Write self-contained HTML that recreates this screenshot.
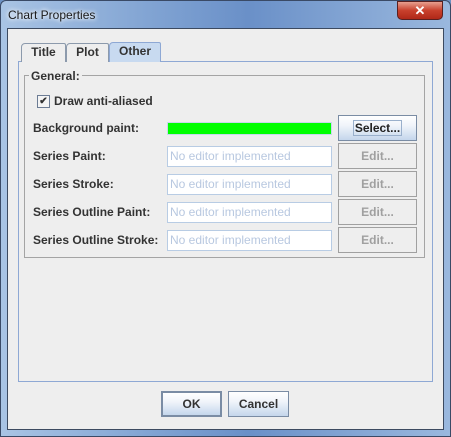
<!DOCTYPE html>
<html><head><style>
*{margin:0;padding:0;box-sizing:border-box}
body{width:451px;height:437px;overflow:hidden;font-family:"Liberation Sans",sans-serif;font-size:12px;font-weight:bold;color:#333;position:relative;background:#6d92c4}
.frame{position:absolute;left:0;top:0;width:451px;height:437px;border-radius:6px 6px 0 0;background:linear-gradient(90deg,#a9c4e4 0%,#7fa2d2 35%,#6a90c8 55%,#9ab8de 100%);border:1px solid #3a4a66}
.title{position:absolute;left:8px;top:8px;font-weight:normal;font-size:12px;color:#1a1a1a;text-shadow:0 0 4px #fff,0 0 6px #fff}
.close{position:absolute;left:397px;top:1px;width:46px;height:19px;border-radius:0 0 5px 5px;background:linear-gradient(#e8a090,#c8402c 50%,#b02818);border:1px solid #5a2020;color:#fff;text-align:center;font-size:13px;line-height:17px}
.client{position:absolute;left:7px;top:28px;width:437px;height:402px;background:#eeeeee;border:1px solid #3c4a60}
.a{position:absolute}
.tab{position:absolute;top:43px;height:19px;border:1px solid #8c9aac;border-bottom:none;background:#eeeeee;text-align:center;line-height:17px;font-size:12px;border-radius:4px 2px 0 0}
.panel{position:absolute;left:18px;top:61px;width:415px;height:321px;border:1px solid #8ea8d4}
.group{position:absolute;left:24px;top:75px;width:401px;height:183px;border:1px solid #a4a4a4}
.lbl{position:absolute;left:33px}
.tf{position:absolute;left:167px;width:165px;height:21px;border:1px solid #b8cce4;background:#fff;color:#b8c8e0;font-weight:normal;padding-left:2px;line-height:19px}
.btn{position:absolute;left:338px;width:79px;height:26px;border:1px solid #a0a0a0;color:#a0a0a0;text-align:center;line-height:24px}
.b2{position:absolute;top:391px;height:26px;border:1px solid #7a8ca4;background:linear-gradient(#fff,#f0f4fa 40%,#c4d6ec);text-align:center;line-height:24px}
</style></head><body>
<div class="frame"></div>
<div class="title">Chart Properties</div>
<div class="close">✕</div>
<div class="client"></div>
<div class="panel"></div>
<div class="tab" style="left:21px;width:45px">Title</div>
<div class="tab" style="left:66px;width:43px">Plot</div>
<div class="tab" style="left:109px;width:52px;top:42px;height:20px;background:#c8daf0;border-color:#8ea8d4">Other</div>
<div class="group"></div>
<div class="a" style="left:29px;top:69px;background:#eee;padding:0 2px">General:</div>
<div class="a" style="left:37px;top:95px;width:13px;height:13px;border:1px solid #6c7c94;background:#f4f4f4;font-size:10px;line-height:11px;text-align:center">✔</div>
<div class="a" style="left:54px;top:94px">Draw anti-aliased</div>
<div class="lbl" style="top:121px">Background paint:</div>
<div class="a" style="left:167px;top:122px;width:165px;height:13px;border:1px solid #c8d8ec;background:#00ff00"></div>
<div class="btn" style="top:115px;color:#222;border-color:#7a8ca4;background:linear-gradient(#fff,#f0f4fa 40%,#c4d6ec)"><span style="border:1px solid #9ab0cc;padding:0 1px">Select...</span></div>
<div class="lbl" style="top:149px">Series Paint:</div>
<div class="tf" style="top:146px">No editor implemented</div>
<div class="btn" style="top:143px">Edit...</div>
<div class="lbl" style="top:177px">Series Stroke:</div>
<div class="tf" style="top:174px">No editor implemented</div>
<div class="btn" style="top:171px">Edit...</div>
<div class="lbl" style="top:205px">Series Outline Paint:</div>
<div class="tf" style="top:202px">No editor implemented</div>
<div class="btn" style="top:199px">Edit...</div>
<div class="lbl" style="top:233px">Series Outline Stroke:</div>
<div class="tf" style="top:230px">No editor implemented</div>
<div class="btn" style="top:227px">Edit...</div>
<div class="b2" style="left:161px;width:61px;border:2px solid #7a8ca4;line-height:22px">OK</div>
<div class="b2" style="left:228px;width:61px">Cancel</div>
</body></html>
